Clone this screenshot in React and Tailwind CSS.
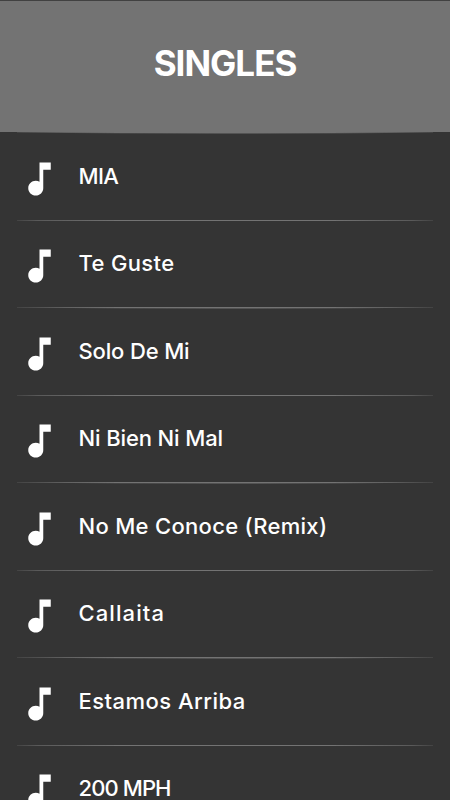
import { MdMusicNote } from 'react-icons/md'

const songs = [
  { title: 'MIA', spacing: 'tracking-[-0.7px]' },
  { title: 'Te Guste', spacing: 'tracking-[0.35px]' },
  { title: 'Solo De Mi', spacing: 'tracking-[-0.15px]' },
  { title: 'Ni Bien Ni Mal', spacing: 'tracking-[-0.12px]' },
  { title: 'No Me Conoce (Remix)', spacing: 'tracking-[0.31px]' },
  { title: 'Callaita', spacing: 'tracking-[1.1px]' },
  { title: 'Estamos Arriba', spacing: 'tracking-[0.46px]' },
  { title: '200 MPH', spacing: 'tracking-[-0.9px]' },
]

export default function App() {
  return (
    <div className="w-[450px] h-[800px] overflow-hidden bg-[#343434] font-['Inter',sans-serif] text-white">
      <header className="h-[132px] border-t border-[#414141] bg-[#737373] flex items-center justify-center pb-[7px]">
        <h1 className="text-[35px] leading-none font-bold tracking-[-1px]">SINGLES</h1>
      </header>
      <Divider />
      <ul>
        {songs.map(song => <SongRow key={song.title} song={song} />)}
      </ul>
    </div>
  )
}

function SongRow({ song }) {
  return (
    <li className="h-[87.5px]">
      <div className="h-[86px] flex items-start pl-[17px] pt-[23px]">
        <MdMusicNote className="w-[45px] h-[44px] shrink-0" preserveAspectRatio="none" />
        <span className={`ml-[16.5px] mt-[3px] text-[22px] leading-[32px] font-medium whitespace-nowrap ${song.spacing}`}>
          {song.title}
        </span>
      </div>
      <Divider />
    </li>
  )
}

// Hairline that tapers off at both ends
function Divider() {
  return (
    <div className="h-[1.5px] px-[17px]">
      <svg className="block w-full h-[1.5px]" viewBox="0 0 416 1.5" preserveAspectRatio="none">
        <path d="M0 .4Q104 -.2 208 0Q312 -.2 416 .4V.7Q312 1.5 208 1.5Q104 1.5 0 .7Z" fill="#737373" />
      </svg>
    </div>
  )
}
